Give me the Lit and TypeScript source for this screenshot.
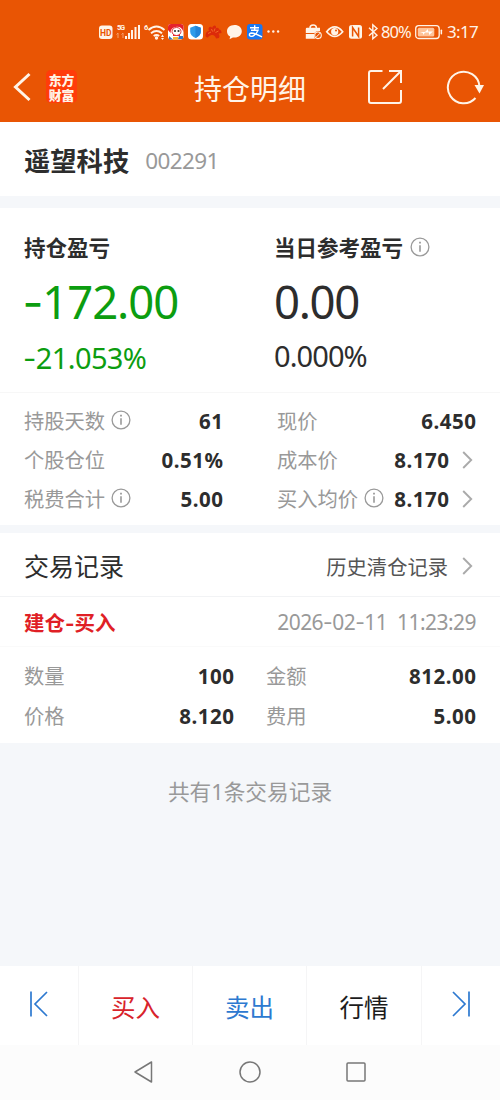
import { LitElement, html, svg, css, nothing } from "lit";
import { customElement, property } from "lit/decorators.js";

const fonts = css`"Noto Sans", "Noto Sans CJK SC", sans-serif`;

const infoIcon = html`<svg class="info" width="20" height="20" viewBox="0 0 20 20" fill="none" stroke="#999" stroke-width="1.3">
  <circle cx="10" cy="10" r="8.9" /><path d="M10 8.2v6.6" stroke-width="1.6" /><path d="M10 4.8v1.8" stroke-width="1.8" />
</svg>`;

const chevron = html`<svg class="chevron" width="11" height="18" viewBox="0 0 11 18" fill="none" stroke="#aaa" stroke-width="1.9">
  <path d="M1.2 1l8 8-8 8" />
</svg>`;

const dashes = (t: string) => t.split("-").map((p, i) => (i ? html`<span class="dash">-</span>${p}` : p));

@customElement("status-bar")
class StatusBar extends LitElement {
  static styles = css`
    :host { display: flex; height: 50px; padding-top: 20px; box-sizing: border-box; color: #fff4e8; font: 17px/24px ${fonts}; }
    svg { display: block; flex: none; }
    .left { margin-left: 98px; }
    .right { margin-left: 20px; }
    .pct { width: 34px; letter-spacing: -0.9px; font-size: 16.5px; white-space: nowrap; }
    .time { margin-left: 4px; letter-spacing: -0.7px; }
  `;
  render() {
    const bar = (x: number, h: number) => svg`<rect x=${x} y=${19 - h} width="2" height=${h} />`;
    return html`
      <svg class="left" width="186" height="24" viewBox="0 0 186 24" fill="#fff4e8">
        <rect x="1" y="5.5" width="13.5" height="13.5" rx="3" />
        <text x="7.7" y="15.7" font-size="8.5" font-weight="700" fill="#e95504" text-anchor="middle" font-family="Roboto, sans-serif">HD</text>
        <text x="19" y="10.3" font-size="7.5" font-weight="700" font-family="Roboto, sans-serif" textLength="8">5G</text>
        <path d="M20 13v5m-1.500-3.500L20 13M25 13v5m-1.500-3.500L25 13" stroke="#f4a06f" stroke-width="1" fill="none" />
        ${bar(27, 3)}${bar(30, 6)}${bar(33, 9)}${bar(36.5, 12)}${bar(40, 14)}
        <text x="46" y="10" font-size="7.5" font-weight="700" font-family="Roboto, sans-serif">6</text>
        <g fill="none" stroke="#fff4e8" stroke-width="1.900">
          <path d="M50.500 10q8-7 16 0M53 13.200q5.500-4.500 11 0M55.700 16q2.800-2 5.500 0" />
        </g>
        <circle cx="58.500" cy="18" r="1.700" /><path d="M63 17l1.500-2.500L66 17zM63 18h3l-1.500 2z" />
        <rect x="70" y="4" width="15.500" height="15.500" rx="3" fill="#fff" />
        <path d="M70 10V7q0-3 3-3h9.500q3 0 3 3v5q-2-6-8-5-5 1-5 6z" fill="#e6222c" />
        <ellipse cx="78.500" cy="11.500" rx="4.500" ry="4" fill="#fff" stroke="#e23b40" />
        <circle cx="77" cy="11" r="1.100" fill="#333" /><circle cx="80.500" cy="11" r="1.100" fill="#333" />
        <path d="M75 14q3.500 3 7 0v2h-7z" fill="#e6222c" />
        <path d="M71 16l4 3.500h-4zM81 16h4v3h-5z" fill="#3177c4" /><path d="M75 17h5v2.500h-5z" fill="#f5b435" />
        <rect x="90" y="4" width="15" height="15.500" rx="3.500" fill="#fff" />
        <path d="M97.500 5.800l5.300 1.900v4q0 3.800-5.300 6.300-5.300-2.500-5.300-6.300v-4z" fill="#2f9bea" />
        <path d="M97.500 5.800l5.300 1.900v4q0 3.800-5.300 6.300z" fill="#2384d9" />
        <path d="M107.500 16q0-5 4-5-2-2 0-4 2-1 2.500 1 1-3 3-2.500 1.500.500 1 2.500 3-1 3 1.500 2.500 0 2.500 3.500l-3 .500q1.500 2 .500 4.500l-3 .500q-1-4-4.500-3.500-3 .500-3.500 2.500-2 0-2.500-1.500z" fill="#dc2a0a" />
        <path d="M110 13.500l3-1.500M113.500 9l1 2.500M117 8.500l-1 3M120.500 11l-3 1.500" stroke="#f06a28" fill="none" />
        <path d="M136.500 5c-4.500 0-7.500 2.800-7.500 6.200 0 2.300 1.200 4.300 3.200 5.400l-.7 2.600 3.400-1.800 1.600.1c4.500 0 7.300-2.800 7.300-6.300S141 5 136.500 5z" />
        <rect x="149" y="4" width="15.500" height="15.500" rx="3" fill="#1877f2" />
        <path d="M152 7.800h9M156.700 5.300v5M153 10.300h7q-1.500 4-5 5.700-2.500 1-3.500-.600-.500-2.200 2-2.400 3 0 10.500 3.800" fill="none" stroke="#fff" stroke-width="1.400" />
        <circle cx="170.500" cy="11.500" r="1.200" /><circle cx="175.300" cy="11.500" r="1.200" /><circle cx="180.100" cy="11.500" r="1.200" />
      </svg>
      <svg class="right" width="77" height="24" viewBox="0 0 77 24" fill="#fff4e8">
        <path d="M6 8q0-3 3.200-3t3.200 3" fill="none" stroke="#fff4e8" stroke-width="1.500" />
        <path d="M3 7.800h13v3.200q-4-.500-5.500 2H1.800V9q0-1.200 1.200-1.200zM1.800 14h8.300q-.300 3 1 4.700H1.800z" />
        <circle cx="14" cy="15.300" r="3.300" fill="none" stroke="#fff4e8" stroke-width="1.100" /><path d="M11.800 17.500l4.400-4.400" stroke="#fff4e8" />
        <path d="M22.700 11.700q8-9.500 16 0-8 9.500-16 0z" fill="none" stroke="#fff4e8" stroke-width="1.700" />
        <circle cx="30.700" cy="11.700" r="3.600" /><circle cx="32" cy="10.500" r="1" fill="#e95504" />
        <rect x="45" y="5" width="13" height="13.700" rx="2.500" />
        <path d="M48.600 16.500V7.500l6 9V7.500" fill="none" stroke="#e95504" stroke-width="1.500" />
        <path d="M65 7.800l8 7.400-4.200 3.600V4.800L73 8.600l-8 7.200" fill="none" stroke="#fff4e8" stroke-width="1.400" />
      </svg>
      <span class="pct">80%</span>
      <svg width="28" height="24" viewBox="0 0 28 24" fill="#fff4e8">
        <rect x=".7" y="5.700" width="23.500" height="12.800" rx="3" fill="none" stroke="#fff4e8" stroke-width="1.300" />
        <rect x="2.800" y="7.700" width="16.500" height="8.800" rx="1.500" fill="#ffc49a" />
        <path d="M5 12h5l3-3v2.500h5L14 15v-2.500h-4L8 15v-2z" fill="#fff" /><rect x="25.600" y="9.500" width="1.500" height="5" rx=".7" />
      </svg>
      <span class="time">3:17</span>`;
  }
}

@customElement("data-row")
class DataRow extends LitElement {
  @property() label = "";
  @property() value = "";
  @property({ type: Boolean }) info = false;
  @property({ type: Boolean }) link = false;
  static styles = css`
    :host { display: flex; align-items: center; height: 39px; font: 20.3px/39px ${fonts}; color: #999; white-space: nowrap; }
    svg { display: block; flex: none; }
    .info { margin: 0 0 3px 6px; }
    .value { margin-left: auto; color: #2d2d2d; font-weight: 700; font-size: 20.5px; letter-spacing: 0.5px; margin-right: -0.5px; }
    .chevron { margin: 0 3px 2px 13px; }
  `;
  render() {
    return html`<span>${this.label}</span>${this.info ? infoIcon : nothing}
      <span class="value">${this.value}</span>${this.link ? chevron : nothing}`;
  }
}

@customElement("app-root")
class AppRoot extends LitElement {
  static styles = css`
    :host { display: flex; flex-direction: column; width: 500px; height: 1100px; background: #f5f7fa; color: #2d2d2d; font-family: ${fonts}; overflow: hidden; white-space: nowrap; }
    svg { display: block; flex: none; }
    .top { background: #e95504; height: 122px; flex: none; }
    .header { display: grid; grid-template-columns: 46px 148px 112px 62px 34px 44px 38px; align-items: center; height: 73px; color: #fff4e8; }
    .back { margin-left: 12px; }
    .share { grid-column: 5; }
    .refresh { grid-column: 7; }
    .logo { width: 31px; height: 33px; border-radius: 5px; background: #ff3c0a; display: flex; flex-direction: column; justify-content: center; font: 900 12.8px/15px "Noto Sans CJK SC", sans-serif; text-align: center; color: #fff4e8; }
    .title { font-size: 28px; line-height: 40px; text-align: center; padding-top: 4px; }
    .stock { background: #fff; height: 74px; flex: none; display: flex; align-items: center; padding: 0 24px; box-sizing: border-box; }
    .name { font-size: 26.3px; font-weight: 700; line-height: 40px; margin-top: 4px; }
    .code { margin-left: 16px; font-size: 22.5px; color: #999; letter-spacing: -0.6px; line-height: 40px; margin-top: 3px; }
    .profit { margin-top: 12px; background: #fff; height: 185px; flex: none; display: grid; grid-template-columns: 250px 1fr; padding: 25px 0 0 24px; box-sizing: border-box; border-bottom: 1px solid #f7f7f7; }
    .caption { display: flex; align-items: center; gap: 7px; font-size: 21.5px; font-weight: 700; line-height: 30px; color: #2d2d2d; }
    .caption .info { margin-bottom: 2px; }
    .amount { font-size: 45.5px; line-height: 60px; letter-spacing: -1.3px; margin-top: 8px; }
    .rate { font-size: 29px; line-height: 40px; letter-spacing: -0.9px; margin-top: 5px; }
    .green { color: #0c9d10; }
    .green .amount { margin-left: -1.5px; letter-spacing: -1.1px; }
    .green .rate { margin-left: -1px; letter-spacing: -0.6px; }
    .dash { font-family: Inter, sans-serif; }
    .facts { background: #fff; height: 132px; flex: none; padding: 9px 24px 0; box-sizing: border-box; display: grid; grid-template-columns: 199px 199px; column-gap: 54px; align-content: start; }
    .records { margin-top: 8px; background: #fff; height: 210px; flex: none; }
    .bar { display: flex; align-items: center; justify-content: space-between; padding: 0 24px; border-bottom: 1px solid #f2f3f5; height: 64px; box-sizing: border-box; }
    .heading { font-size: 25px; line-height: 36px; margin-top: 2px; }
    .history { display: flex; align-items: center; gap: 14px; padding-right: 3px; font-size: 20.3px; color: #555; margin-top: 2px; }
    .entry { height: 50px; border-bottom: 1px solid #fafafa; }
    .kind { color: #e01f26; font-weight: 700; font-size: 20.5px; }
    .when { color: #999; font-size: 21px; letter-spacing: -0.55px; word-spacing: 5px; margin-top: 1px; }
    .detail { display: grid; grid-template-columns: 210px 210px; column-gap: 32px; padding: 10px 24px 0; row-gap: 1px; }
    .total { text-align: center; font-size: 21.7px; line-height: 30px; color: #999; margin-top: 34px; flex: 1; }
    .tabs { display: grid; grid-template-columns: 79px 114px 114px 115px 78px; height: 79px; flex: none; background: #fff; font-size: 24.5px; }
    .tab { display: flex; align-items: center; justify-content: center; border-right: 1px solid #f5f5f6; padding-top: 2px; }
    .tab svg { margin-bottom: 5px; }
    .tab:last-child { border-right: 0; }
    .red { color: #d8232b; }
    .blue { color: #2d79d0; }
    .ink { color: #1c1c1c; }
    .nav { display: flex; justify-content: center; align-items: center; gap: 84px; height: 55px; padding-bottom: 2px; box-sizing: border-box; flex: none; background: #fcfcfc; }
  `;
  render() {
    return html`
      <div class="top">
        <status-bar></status-bar>
        <div class="header">
          <svg class="back" width="20" height="30" viewBox="0 0 20 30" fill="none" stroke="#fff4e8" stroke-width="3"><path d="M17.500 2L3.500 15l14 13" /></svg>
          <div class="logo"><span>东方</span><span>财富</span></div>
          <div class="title">持仓明细</div>
          <svg class="share" width="34" height="34" viewBox="0 0 34 34" fill="none" stroke="#fff4e8" stroke-width="2"><path d="M14.500 1H3Q1 1 1 3v28q0 2 2 2h28q2 0 2-2V20M21 1h12v12M32.500 1.500L15 19" /></svg>
          <svg class="refresh" width="39" height="36" viewBox="0 0 39 36" fill="none" stroke="#fff4e8" stroke-width="2"><path d="M29.500 29A15.800 15.800 0 1 1 33.400 17" /><path d="M28.500 16h9.500L33.500 24.500z" fill="#fff4e8" stroke="none" /></svg>
        </div>
      </div>
      <div class="stock"><span class="name">遥望科技</span><span class="code">002291</span></div>
      <div class="profit">
        <div class="green">
          <div class="caption">持仓盈亏</div>
          <div class="amount">${dashes("-172.00")}</div>
          <div class="rate">${dashes("-21.053%")}</div>
        </div>
        <div>
          <div class="caption">当日参考盈亏${infoIcon}</div>
          <div class="amount">0.00</div>
          <div class="rate">0.000%</div>
        </div>
      </div>
      <div class="facts">
        <data-row label="持股天数" value="61" info></data-row><data-row label="现价" value="6.450"></data-row>
        <data-row label="个股仓位" value="0.51%"></data-row><data-row label="成本价" value="8.170" link></data-row>
        <data-row label="税费合计" value="5.00" info></data-row><data-row label="买入均价" value="8.170" info link></data-row>
      </div>
      <div class="records">
        <div class="bar"><span class="heading">交易记录</span><span class="history">历史清仓记录${chevron}</span></div>
        <div class="bar entry"><span class="kind">${dashes("建仓-买入")}</span><span class="when">${dashes("2026-02-11 11:23:29")}</span></div>
        <div class="detail">
          <data-row label="数量" value="100"></data-row><data-row label="金额" value="812.00"></data-row>
          <data-row label="价格" value="8.120"></data-row><data-row label="费用" value="5.00"></data-row>
        </div>
      </div>
      <div class="total">共有1条交易记录</div>
      <div class="tabs">
        <div class="tab"><svg width="20" height="26" viewBox="0 0 20 26" fill="none" stroke="#2d79d0" stroke-width="1.700"><path d="M2 .5v25M18 1L6 13l12 12" /></svg></div>
        <div class="tab red">买入</div>
        <div class="tab blue">卖出</div>
        <div class="tab ink">行情</div>
        <div class="tab"><svg width="20" height="26" viewBox="0 0 20 26" fill="none" stroke="#2d79d0" stroke-width="1.700"><path d="M18 .5v25M2 1l12 12L2 25" /></svg></div>
      </div>
      <div class="nav">
        <svg width="22" height="24" viewBox="0 0 22 24" fill="none" stroke="#777" stroke-width="1.500" stroke-linejoin="round"><path d="M2 12L18.500 2v20z" /></svg>
        <svg width="22" height="22" viewBox="0 0 22 22" fill="none" stroke="#777" stroke-width="1.500"><circle cx="11" cy="11" r="10" /></svg>
        <svg width="22" height="22" viewBox="0 0 22 22" fill="none" stroke="#777" stroke-width="1.500"><rect x="2" y="2" width="18" height="18" rx="1" /></svg>
      </div>`;
  }
}
